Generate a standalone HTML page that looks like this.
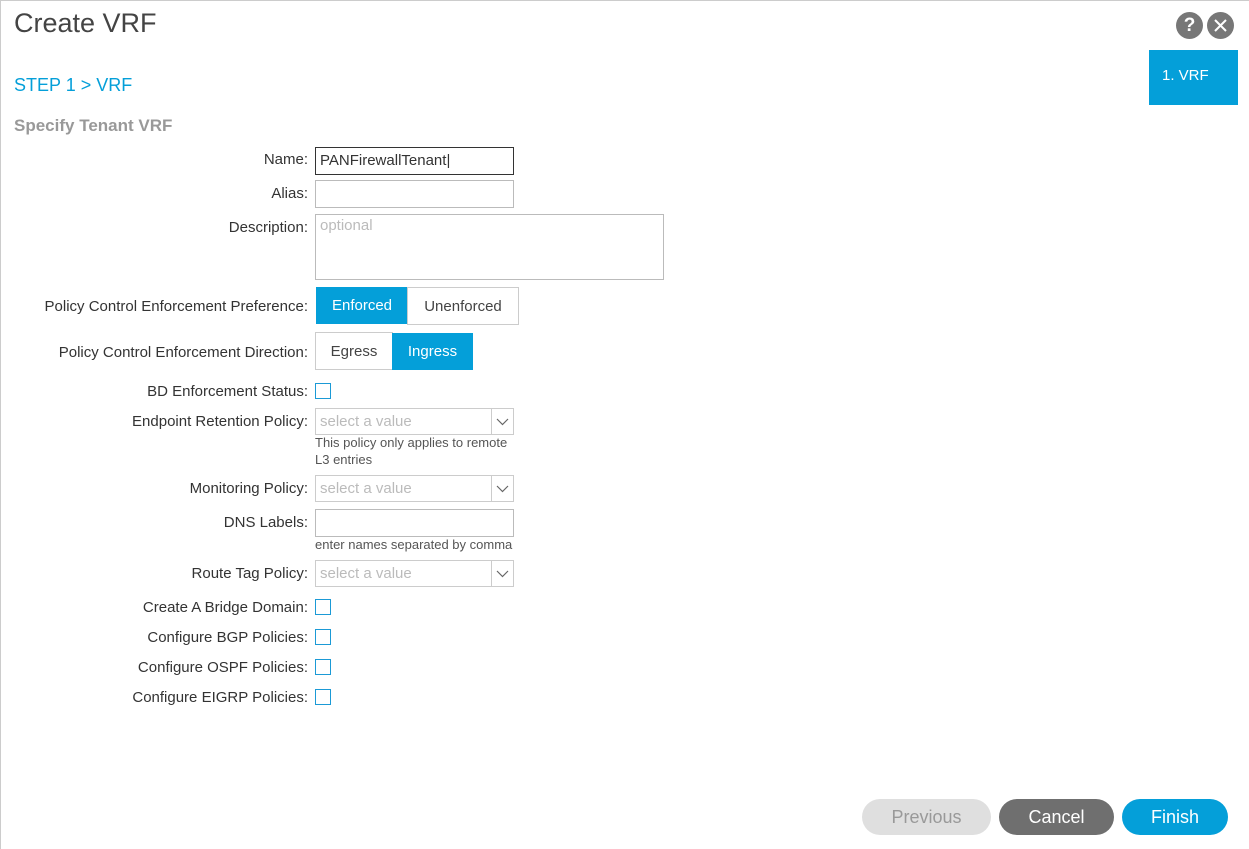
<!DOCTYPE html>
<html><head><style>
body{margin:0;width:1249px;height:849px;background:#fff;font-family:"Liberation Sans",sans-serif;position:relative;overflow:hidden}
.a{position:absolute}
.lbl{position:absolute;right:941px;font-size:15px;color:#333;text-align:right;white-space:nowrap;margin-top:1px}
.in{position:absolute;left:315px;width:197px;height:26px;border:1px solid #bbb;background:#fff;box-sizing:content-box}
.sel{position:absolute;left:315px;color:#bbb;font-size:15px;line-height:25px;padding-left:4px;box-sizing:border-box;width:199px;height:27px;border:1px solid #ccc}
.sel:after{content:"";position:absolute;right:0;top:0;width:21px;height:25px;border-left:1px solid #ccc}
.sel svg{position:absolute;right:4px;top:9px}
.cb{position:absolute;left:315px;width:14px;height:14px;border:1px solid #1b9ad6}
.help{position:absolute;left:315px;font-size:13px;color:#555}
.btn{position:absolute;font-size:15px;text-align:center;box-sizing:border-box}
.rb{position:absolute;top:799px;height:36px;border-radius:18px;font-size:18px;line-height:36px;text-align:center;color:#fff}
</style></head><body>
<div class="a" style="left:0;top:0;width:1249px;height:1px;background:#ccc"></div>
<div class="a" style="left:0;top:0;width:1px;height:849px;background:#ccc"></div>
<div class="a" style="left:14px;top:8px;font-size:27px;color:#444">Create VRF</div>
<div class="a" style="left:1176px;top:12px;width:27px;height:27px;border-radius:50%;background:#777;color:#fff;font-weight:bold;font-size:19px;text-align:center;line-height:27px">?</div>
<div class="a" style="left:1207px;top:12px;width:27px;height:27px;border-radius:50%;background:#777"><svg width="27" height="27"><path d="M8 8L19 19M19 8L8 19" stroke="#fff" stroke-width="2"/></svg></div>
<div class="a" style="left:1149px;top:50px;width:89px;height:55px;background:#049fd9;color:#fff;font-size:15px;line-height:52px;padding-left:13px;box-sizing:border-box">1. VRF</div>
<div class="a" style="left:14px;top:75px;font-size:18px;color:#049fd9">STEP 1 &gt; VRF</div>
<div class="a" style="left:14px;top:116px;font-size:17px;color:#999;font-weight:bold">Specify Tenant VRF</div>

<div class="lbl" style="top:150px">Name:</div>
<div class="in" style="top:147px;border-color:#333;font-size:15px;line-height:26px;padding-left:4px;width:193px;color:#333">PANFirewallTenant|</div>
<div class="lbl" style="top:184px">Alias:</div>
<div class="in" style="top:180px"></div>
<div class="lbl" style="top:218px">Description:</div>
<div class="in" style="top:214px;color:#bbb;font-size:15px;padding-left:4px;width:343px;padding-top:2px;height:62px">optional</div>

<div class="lbl" style="top:297px">Policy Control Enforcement Preference:</div>
<div class="btn" style="left:316px;top:287px;width:92px;height:37px;background:#049fd9;color:#fff;line-height:38px">Enforced</div>
<div class="btn" style="left:407px;top:287px;width:112px;height:38px;border:1px solid #ccc;color:#444;line-height:37px">Unenforced</div>
<div class="lbl" style="top:343px">Policy Control Enforcement Direction:</div>
<div class="btn" style="left:315px;top:332px;width:78px;height:38px;border:1px solid #ccc;color:#444;line-height:37px">Egress</div>
<div class="btn" style="left:392px;top:333px;width:81px;height:37px;background:#049fd9;color:#fff;line-height:38px">Ingress</div>

<div class="lbl" style="top:382px">BD Enforcement Status:</div>
<div class="cb" style="top:383px"></div>
<div class="lbl" style="top:412px">Endpoint Retention Policy:</div>
<div class="sel" style="top:408px">select a value<svg width="13" height="8"><path d="M1 1L6.5 6.5L12 1" fill="none" stroke="#666" stroke-width="1.2"/></svg></div>
<div class="help" style="top:435px">This policy only applies to remote</div>
<div class="help" style="top:452px">L3 entries</div>
<div class="lbl" style="top:479px">Monitoring Policy:</div>
<div class="sel" style="top:475px">select a value<svg width="13" height="8"><path d="M1 1L6.5 6.5L12 1" fill="none" stroke="#666" stroke-width="1.2"/></svg></div>
<div class="lbl" style="top:513px">DNS Labels:</div>
<div class="in" style="top:509px"></div>
<div class="help" style="top:537px">enter names separated by comma</div>
<div class="lbl" style="top:564px">Route Tag Policy:</div>
<div class="sel" style="top:560px">select a value<svg width="13" height="8"><path d="M1 1L6.5 6.5L12 1" fill="none" stroke="#666" stroke-width="1.2"/></svg></div>

<div class="lbl" style="top:598px">Create A Bridge Domain:</div><div class="cb" style="top:599px"></div>
<div class="lbl" style="top:628px">Configure BGP Policies:</div><div class="cb" style="top:629px"></div>
<div class="lbl" style="top:658px">Configure OSPF Policies:</div><div class="cb" style="top:659px"></div>
<div class="lbl" style="top:688px">Configure EIGRP Policies:</div><div class="cb" style="top:689px"></div>

<div class="rb" style="left:862px;width:129px;background:#dfdfdf;color:#999">Previous</div>
<div class="rb" style="left:999px;width:115px;background:#6f6f6f">Cancel</div>
<div class="rb" style="left:1122px;width:106px;background:#049fd9">Finish</div>
</body></html>
